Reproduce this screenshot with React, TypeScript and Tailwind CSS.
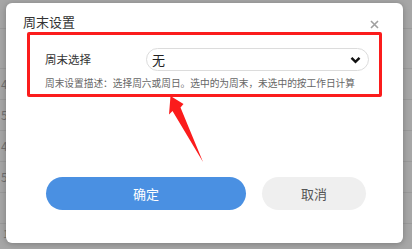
import { useState } from "react";

const rows = [
  { id: "49" },
  { id: "50" },
  { id: "4a" },
  { id: "54" },
  { id: "" },
];

function Backdrop() {
  return (
    <div className="flex flex-col w-full h-full bg-[#a6a6a6] text-[#6f6f6f] text-[12px]">
      <div className="h-[29px] shrink-0 border-b border-[#9a9a9a]" />
      <div className="h-[40px] shrink-0 border-b border-[#9a9a9a]" />
      {rows.map((r, i) => (
        <div
          key={i}
          className="h-[31px] shrink-0 border-b border-[#9a9a9a] flex items-center pl-[1px]"
        >
          {r.id}
        </div>
      ))}
      <div className="flex items-start pt-[1px] text-[11px]">
        <span className="pl-[3px] w-[280px]">18:23</span>
        <span className="w-[100px]">17:23:12</span>
        <span>534</span>
      </div>
    </div>
  );
}

export default function App() {
  const [week] = useState("无");

  return (
    <div
      className="relative w-[412px] h-[249px] overflow-hidden"
      style={{ fontFamily: '"Noto Sans CJK SC", "Noto Sans", sans-serif' }}
    >
      <Backdrop />

      <div className="absolute left-[6px] top-[3px] w-[397px] h-[240px] bg-white rounded-[6px] shadow-[0_1px_6px_rgba(0,0,0,0.25)] flex flex-col">
        <div className="flex items-center justify-between pl-[17px] pr-[24px] pt-[9px] h-[29px]">
          <span className="text-[13px] leading-[20px] text-[#333]">周末设置</span>
          <svg width="9" height="9" viewBox="0 0 9 9" className="mt-[4px]">
            <path d="M1 1L8 8M8 1L1 8" stroke="#a0a0a0" strokeWidth="1.6" />
          </svg>
        </div>

        <div className="ml-[21px] w-[355px] h-[65px] border-[3px] border-[#fb1c1c] rounded-[2px] px-[15px] pt-[13px] flex flex-col">
          <div className="flex items-center h-[23px]">
            <span className="w-[101px] text-[11.5px] text-[#333]">周末选择</span>
            <div className="flex-1 mr-[-5px] h-[23px] rounded-full border border-[#dcdcdc] flex items-center justify-between pl-[5px] pr-[7px]">
              <span className="text-[13px] text-[#222]">{week}</span>
              <svg width="11" height="8" viewBox="0 0 11 8">
                <path d="M1.5 1.8L5.5 5.8L9.5 1.8" fill="none" stroke="#111" strokeWidth="2.4" />
              </svg>
            </div>
          </div>
          <p className="mt-[5px] text-[9.7px] leading-[14px] text-[#666] whitespace-nowrap">
            周末设置描述：选择周六或周日。选中的为周末，未选中的按工作日计算
          </p>
        </div>

        <div className="flex items-center mt-[80px] pl-[40px] gap-[16px]">
          <button className="w-[200px] h-[33px] rounded-full bg-[#4a90e2] text-white text-[13px]">
            确定
          </button>
          <button className="w-[104px] h-[33px] rounded-full bg-[#efefef] text-[#555] text-[13px]">
            取消
          </button>
        </div>
      </div>

      <svg
        className="absolute left-0 top-0 pointer-events-none"
        width="412"
        height="249"
        viewBox="0 0 412 249"
      >
        <polygon
          points="170.5,96 183.5,104 180.5,107.5 203,162 172.5,111 169,114.5"
          fill="#fb1c1c"
        />
      </svg>
    </div>
  );
}
